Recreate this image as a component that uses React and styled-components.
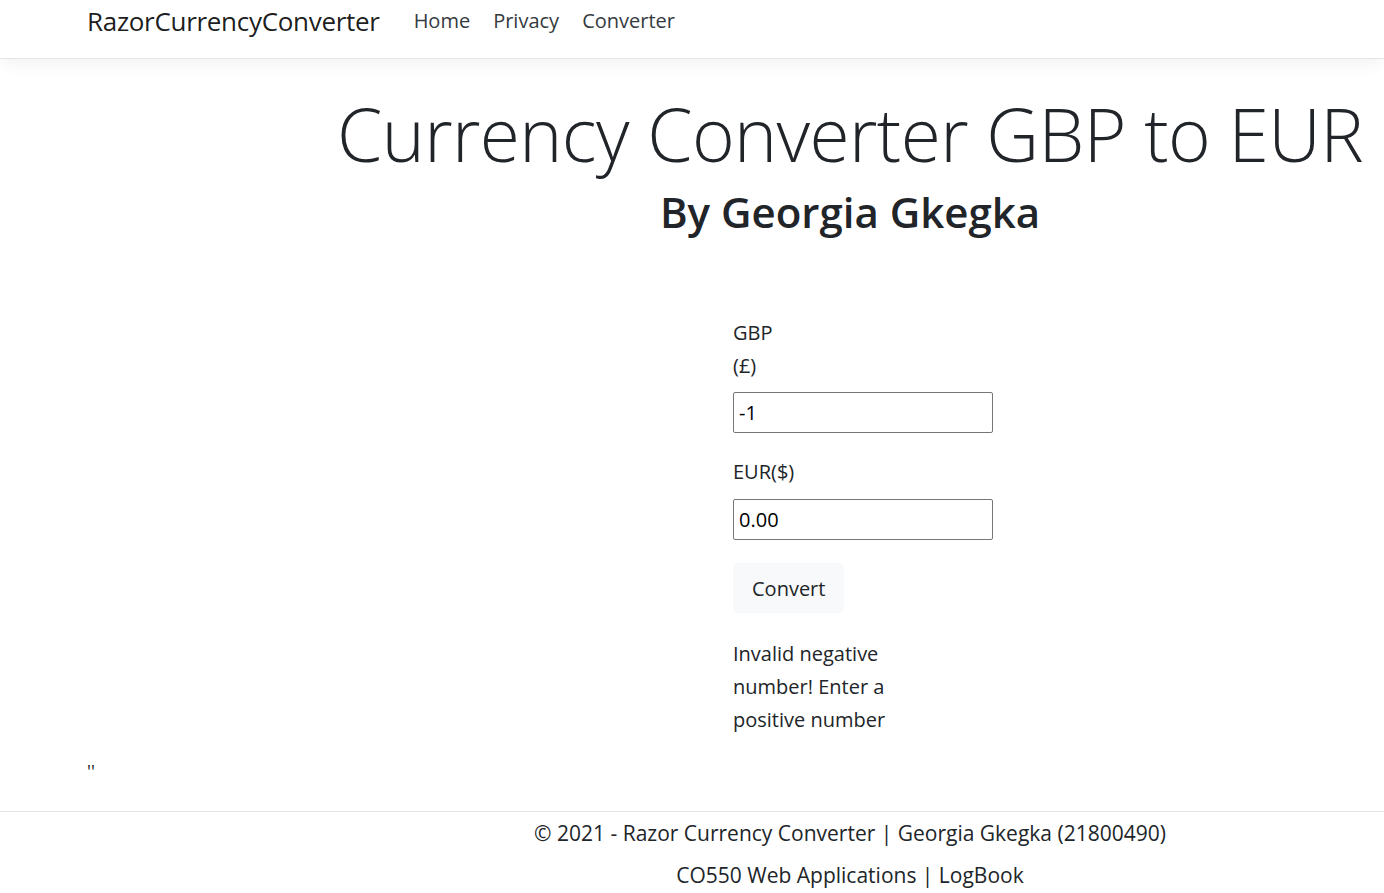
import React from 'react'
import styled, { createGlobalStyle } from 'styled-components'

const GlobalStyle = createGlobalStyle`
	* {
		box-sizing: border-box;
	}
	body {
		margin: 0;
		background: #fff;
		color: #212529;
		font-family: 'Open Sans', 'Noto Sans', sans-serif;
		font-size: 22px;
		line-height: 33px;
	}
`

const Header = styled.header`
	height: 59px;
	border-bottom: 1px solid #e5e5e5;
	box-shadow: 0 5px 16px rgba(0, 0, 0, 0.05);
	display: flex;
	align-items: center;
	padding: 0 0 16px 87px;
`

const Brand = styled.a`
	font-size: 26px;
	color: rgba(0, 0, 0, 0.9);
	text-decoration: none;
	margin-right: 34px;
	letter-spacing: -0.3px;
`

const NavList = styled.nav`
	display: flex;
	gap: 23px;
	padding-bottom: 2px;
`

const NavLink = styled.a`
	font-size: 20px;
	color: #343a40;
	text-decoration: none;
`

const Hero = styled.div`
	margin-left: 316px;
	text-align: center;
	padding-top: 29px;
`

const Title = styled.h1`
	margin: 0;
	font-size: 73px;
	font-weight: 300;
	line-height: 92px;
	letter-spacing: -0.6px;
`

const Subtitle = styled.h2`
	margin: 5px 0 0;
	font-size: 42px;
	font-weight: 600;
	line-height: 53px;
`

const Form = styled.form`
	padding: 78px 0 0 733px;
	display: flex;
	flex-direction: column;
	align-items: flex-start;
`

const Label = styled.label`
	display: block;
	width: ${({ narrow }) => (narrow ? '50px' : 'auto')};
	font-size: 20px;
`

const Input = styled.input`
	width: 260px;
	height: 41px;
	margin: ${({ top }) => top}px 0 0;
	padding: 0 5px;
	border: 1px solid #767676;
	border-radius: 2px;
	font-family: inherit;
	font-size: 20px;
	color: #000;
	outline: none;
`

const Spacer = styled.div`
	height: ${({ h }) => h}px;
`

const Button = styled.button`
	margin-top: 23px;
	height: 50px;
	padding: 0 19px;
	border: none;
	border-radius: 5px;
	background: #f8f9fa;
	color: #212529;
	font-family: inherit;
	font-size: 20px;
	cursor: pointer;
`

const Message = styled.p`
	margin: 24px 0 0;
	width: 170px;
	font-size: 20px;
`

const Stray = styled.div`
	padding: 19px 0 0 87px;
	height: 75px;
	font-size: 18px;
`

const Footer = styled.footer`
	border-top: 1px solid #e5e5e5;
	text-align: center;
	padding: 0 0 0 316px;
	font-size: 21px;
	line-height: 42px;
`

export default function App() {
	return (
		<>
			<GlobalStyle />
			<Header>
				<Brand href="#">RazorCurrencyConverter</Brand>
				<NavList>
					<NavLink href="#">Home</NavLink>
					<NavLink href="#">Privacy</NavLink>
					<NavLink href="#">Converter</NavLink>
				</NavList>
			</Header>
			<Hero>
				<Title>Currency Converter GBP to EUR</Title>
				<Subtitle>By Georgia Gkegka</Subtitle>
			</Hero>
			<Form onSubmit={(e) => e.preventDefault()}>
				<Label narrow>GBP (£)</Label>
				<Input top={10} defaultValue="-1" />
				<Spacer h={22} />
				<Label>EUR($)</Label>
				<Input top={11} defaultValue="0.00" />
				<Button type="submit">Convert</Button>
				<Message>Invalid negative number! Enter a positive number</Message>
			</Form>
			<Stray>''</Stray>
			<Footer>
				<div>© 2021 - Razor Currency Converter | Georgia Gkegka (21800490)</div>
				<div>CO550 Web Applications | LogBook</div>
			</Footer>
		</>
	)
}
